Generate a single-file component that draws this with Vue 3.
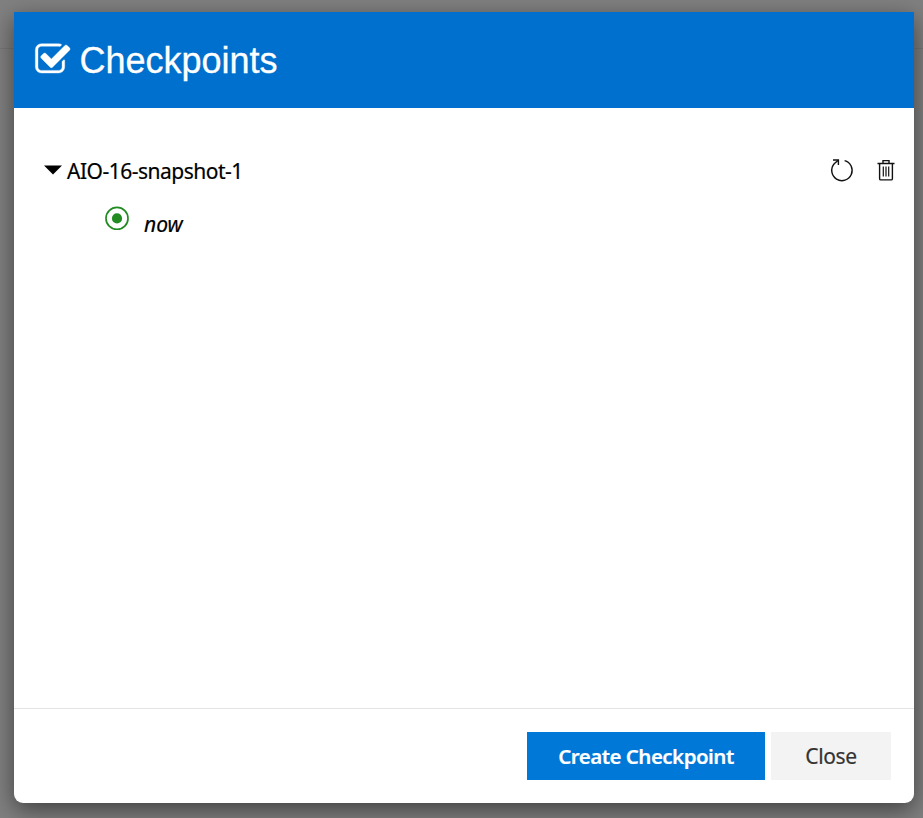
<script setup>
const checkpoint = { name: 'AIO-16-snapshot-1', current: 'now' }
</script>

<template>
  <div class="backdrop">
    <section class="modal" role="dialog" aria-labelledby="title">
      <header class="header">
        <svg class="title-icon" viewBox="0 0 1792 1792" aria-hidden="true">
          <path d="M1472 930v318q0 119-84.5 203.5t-203.5 84.5h-832q-119 0-203.5-84.5t-84.5-203.5v-832q0-119 84.5-203.5t203.5-84.5h832q63 0 117 25 15 7 18 23 3 17-9 29l-49 49q-10 10-23 10-3 0-9-2-23-6-45-6h-832q-66 0-113 47t-47 113v832q0 66 47 113t113 47h832q66 0 113-47t47-113v-254q0-13 9-22l64-64q10-10 23-10 6 0 12 3 20 8 20 29zm231-489l-814 814q-24 24-57 24t-57-24l-430-430q-24-24-24-57t24-57l110-110q24-24 57-24t57 24l263 263 647-647q24-24 57-24t57 24l110 110q24 24 24 57t-24 57z" />
        </svg>
        <h1 id="title" class="title">Checkpoints</h1>
      </header>

      <main class="body">
        <div class="row">
          <svg class="caret" viewBox="0 0 18 10" aria-hidden="true"><path d="M0 0.5H18L9 9.5Z" /></svg>
          <span class="name">{{ checkpoint.name }}</span>
          <button class="action" type="button">
            <svg width="24" height="26" viewBox="0 0 24 26" aria-hidden="true">
              <path d="M14.6 2.6A10.2 10.2 0 1 1 4.2 5.8L8.2 2.3" />
              <path d="M3 2H8.4V6.9" />
            </svg>
          </button>
          <button class="action" type="button">
            <svg width="18" height="24" viewBox="0 0 18 24" aria-hidden="true">
              <path d="M0.5 4.5H17.5M6 4V1.6H12V4M2.6 4.5V19.7Q2.6 20.9 3.8 20.9H14.2Q15.4 20.9 15.4 19.7V4.5" />
              <path class="slats" d="M6.3 7.5V17.5M9 7.5V17.5M11.7 7.5V17.5" />
            </svg>
          </button>
        </div>
        <div class="child">
          <svg class="radio" viewBox="0 0 24 24" aria-hidden="true">
            <circle class="ring" cx="12" cy="12.4" r="11" />
            <circle class="dot" cx="12" cy="12.4" r="5.1" />
          </svg>
          <em class="now">{{ checkpoint.current }}</em>
        </div>
      </main>

      <footer class="footer">
        <button class="btn primary" type="button"><span>Create Checkpoint</span></button>
        <button class="btn" type="button"><span>Close</span></button>
      </footer>
    </section>
  </div>
</template>

<style>
body {
  margin: 0;
}
</style>

<style scoped>
.backdrop {
  box-sizing: border-box;
  width: 923px;
  height: 818px;
  padding: 12px 9px 15px 14px;
  overflow: hidden;
  background: linear-gradient(#777, #777) 0 48px / 100% 1px no-repeat, #808080;
  font-family: "Noto Sans", "Open Sans", sans-serif;
}
.modal {
  display: flex;
  flex-direction: column;
  height: 791px;
  background: #fff;
  border-radius: 0 0 9px 9px;
  box-shadow: 0 7px 23px rgba(0, 0, 0, 0.5);
}
.header {
  display: flex;
  align-items: center;
  box-sizing: border-box;
  height: 96px;
  padding-left: 20px;
  background: #0070ce;
  color: #fff;
}
.title-icon {
  width: 37.4px;
  height: 37.4px;
  fill: currentColor;
  stroke: currentColor;
  stroke-width: 16;
}
.title {
  margin: 2px 0 0 8px;
  font: 400 36px/42px "Liberation Sans", Arial, sans-serif;
  -webkit-text-stroke: 0.3px currentColor;
}
.body {
  flex: 1;
  padding: 45px 19px 0 30px;
  color: #000;
  font-size: 21px;
}
.row {
  display: flex;
  align-items: center;
  height: 36px;
}
.caret {
  width: 18px;
  height: 10px;
  margin-top: -2px;
}
.name {
  flex: 1;
  margin-left: 5px;
  line-height: 36px;
  margin-top: -1px;
  letter-spacing: -0.5px;
  -webkit-text-stroke: 0.2px currentColor;
}
.action {
  display: flex;
  padding: 0;
  border: 0;
  background: none;
}
.action + .action {
  margin-left: 23px;
}
.action svg {
  fill: none;
  stroke: #111;
  stroke-width: 1.4;
}
.action .slats {
  stroke-width: 1.2;
}
.child {
  display: flex;
  align-items: flex-start;
  margin-top: 17px;
  padding-left: 61px;
}
.radio {
  width: 24px;
  height: 24px;
}
.ring {
  fill: none;
  stroke: #228b22;
  stroke-width: 1.7;
}
.dot {
  fill: #228b22;
}
.now {
  margin: 0 0 0 15px;
  line-height: 36px;
  -webkit-text-stroke: 0.2px currentColor;
}
.footer {
  display: flex;
  justify-content: flex-end;
  gap: 6px;
  box-sizing: border-box;
  height: 95px;
  padding: 23px 23px 0 0;
  border-top: 1px solid #e3e3e3;
}
.btn {
  width: 120px;
  height: 48px;
  padding: 0;
  border: 0;
  background: #f3f3f3;
  color: #333;
  font: 400 21px/48px "Noto Sans", "Open Sans", sans-serif;
  letter-spacing: -0.4px;
  white-space: nowrap;
  -webkit-text-stroke: 0.2px currentColor;
}
.primary {
  width: 238px;
  background: #0078d7;
  color: #fff;
  font-size: 20.5px;
  font-weight: 600;
  letter-spacing: -0.53px;
}
</style>
